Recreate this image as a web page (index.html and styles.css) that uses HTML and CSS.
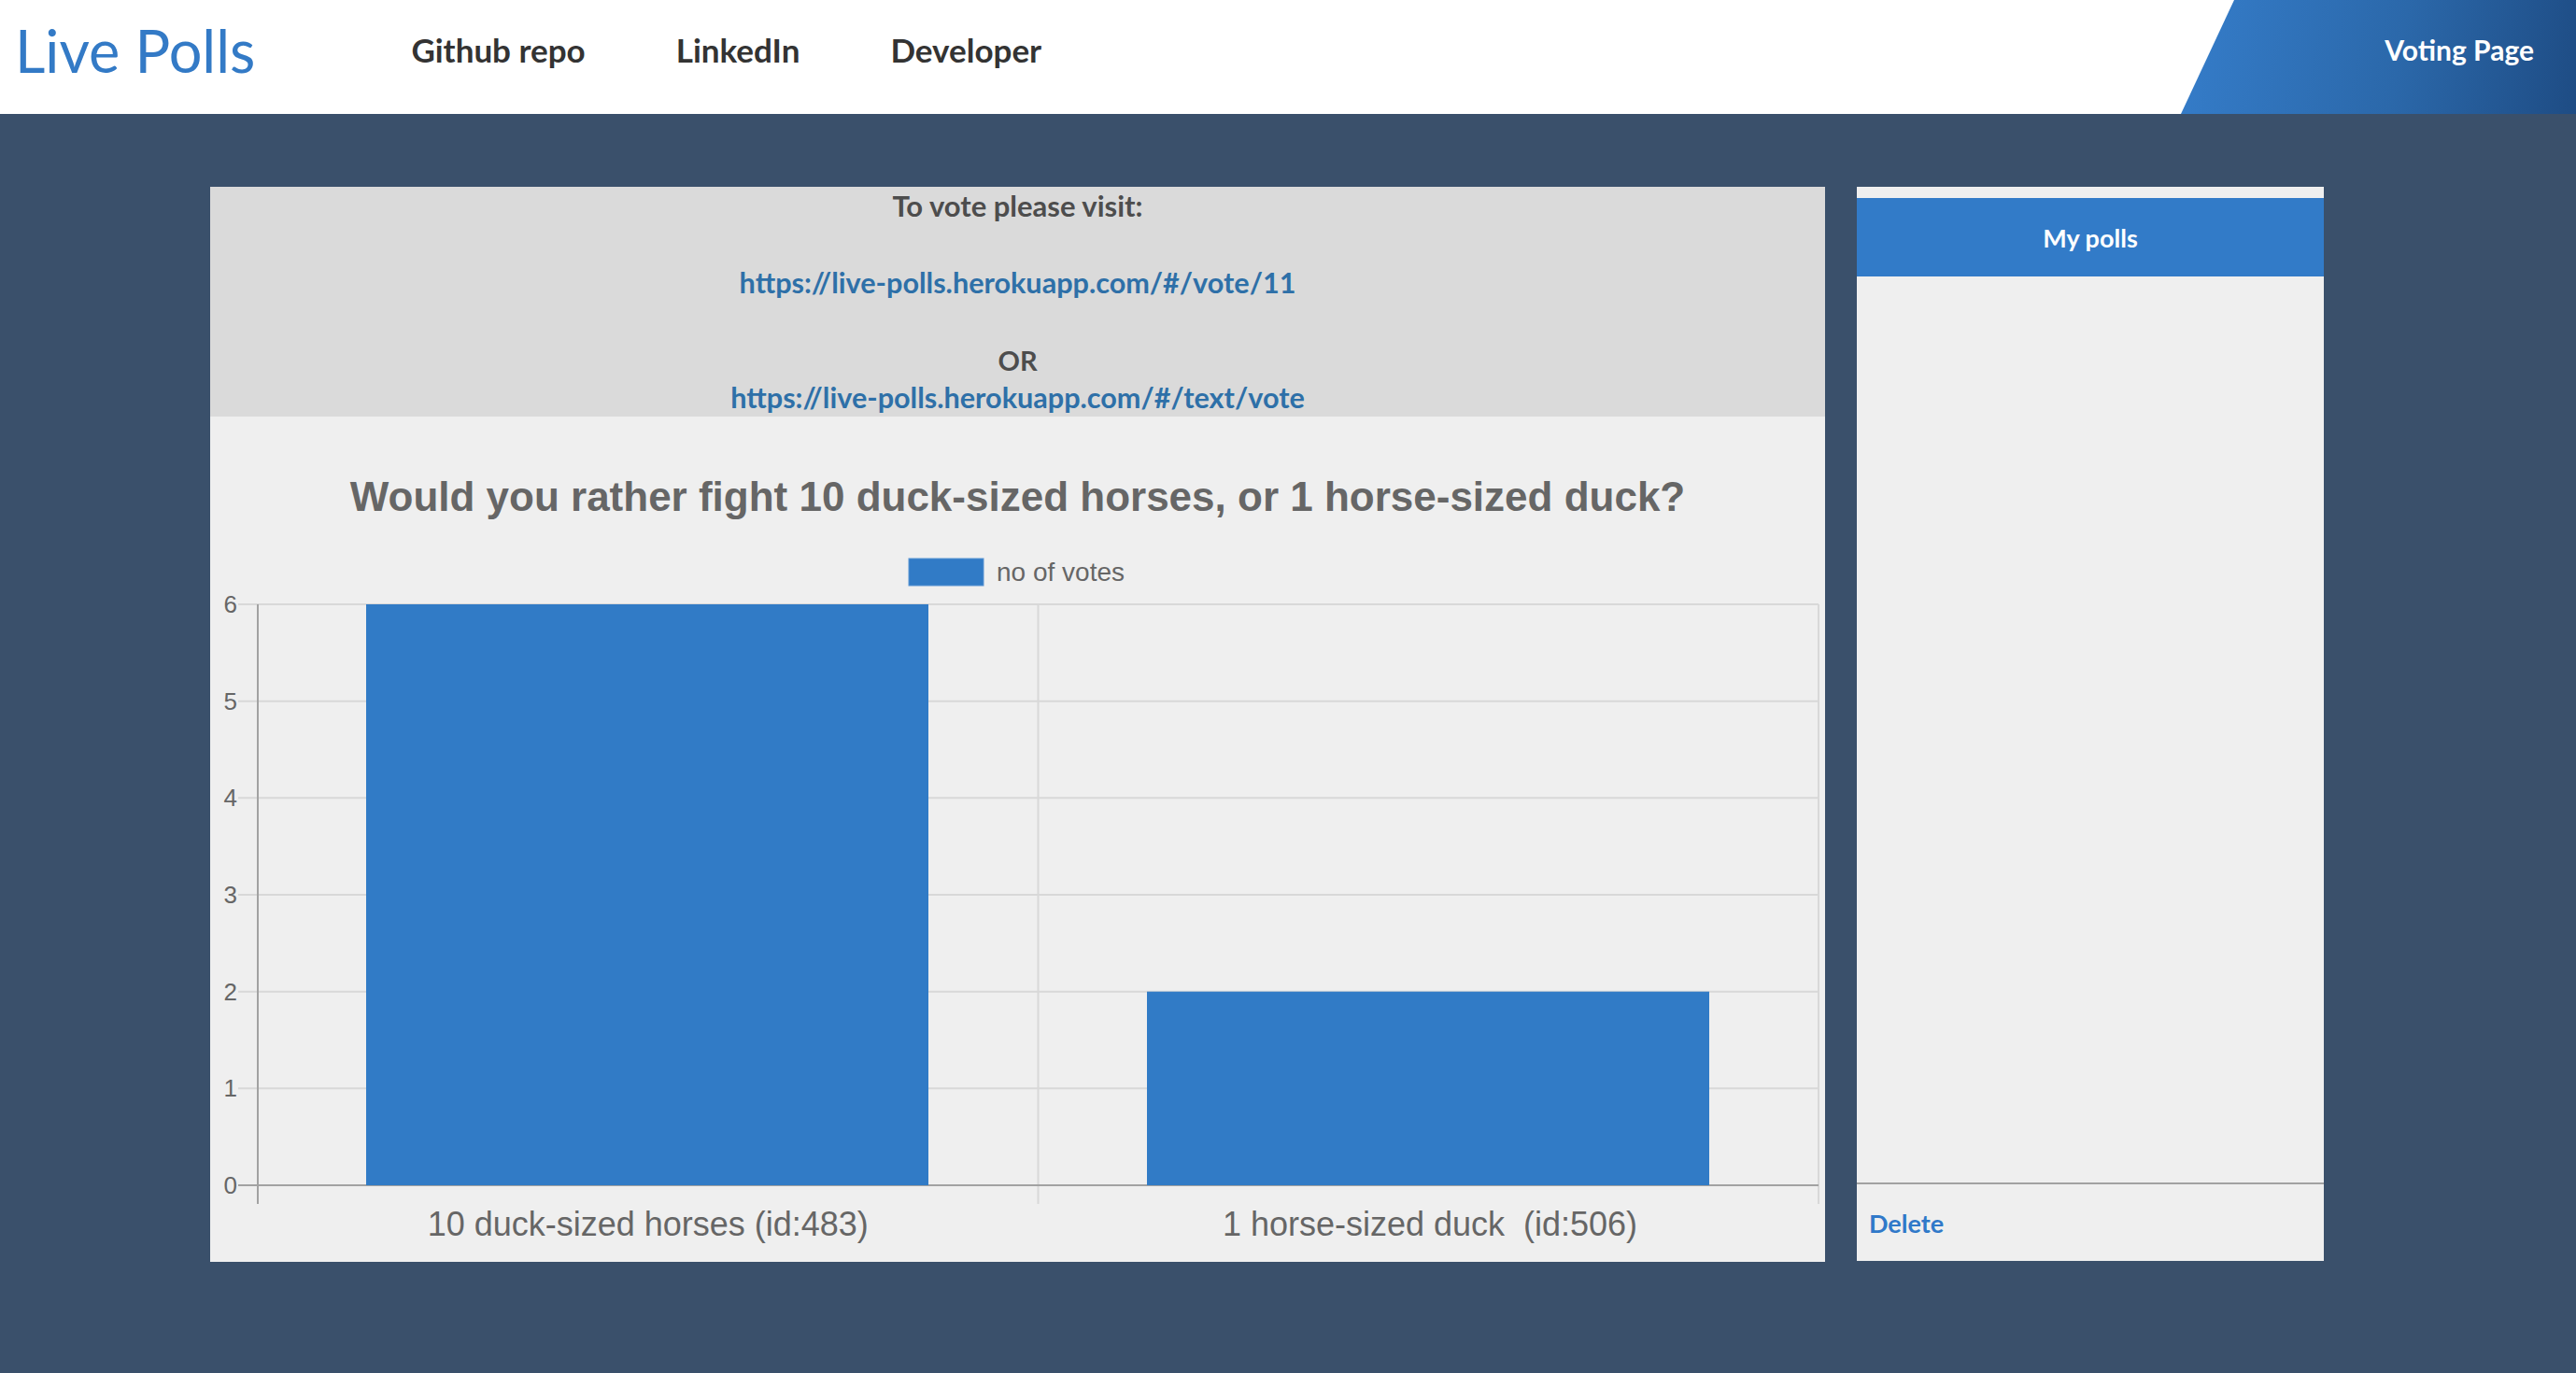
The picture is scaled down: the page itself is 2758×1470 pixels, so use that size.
FILE: index.html
```html
<!DOCTYPE html>
<html lang="en">
<head>
<meta charset="utf-8">
<title>Live Polls</title>
<link rel="stylesheet" href="styles.css">
</head>
<body>
<header class="topbar">
  <a class="brand" href="#">Live Polls</a>
  <nav class="nav">
    <a class="nav-link" href="#">Github repo</a>
    <a class="nav-link" href="#">LinkedIn</a>
    <a class="nav-link" href="#">Developer</a>
  </nav>
  <a class="voting" href="#">Voting Page</a>
</header>

<main class="main">
  <section class="poll-card">
    <div class="visit">
      <h4 class="visit-title">To vote please visit:</h4>
      <a class="visit-link first" href="#">https://live-polls.herokuapp.com/#/vote/11</a>
      <p class="visit-or">OR</p>
      <a class="visit-link last" href="#">https://live-polls.herokuapp.com/#/text/vote</a>
    </div>
    <div class="chart">
      <svg class="chart-svg" width="1729" height="905" viewBox="0 0 1729 905">
        <text class="c-title" x="864.5" y="101" text-anchor="middle">Would you rather fight 10 duck-sized horses, or 1 horse-sized duck?</text>
        <rect x="748" y="152" width="80" height="29" fill="#317bc6" stroke="#5a95d3" stroke-width="1"/>
        <text class="c-legend" x="842" y="176">no of votes</text>

        <g stroke="#d8d8d8" stroke-width="2">
          <line x1="30" y1="201" x2="1722" y2="201"/>
          <line x1="30" y1="304.67" x2="1722" y2="304.67"/>
          <line x1="30" y1="408.33" x2="1722" y2="408.33"/>
          <line x1="30" y1="512" x2="1722" y2="512"/>
          <line x1="30" y1="615.67" x2="1722" y2="615.67"/>
          <line x1="30" y1="719.33" x2="1722" y2="719.33"/>
          <line x1="886.5" y1="201" x2="886.5" y2="843"/>
          <line x1="1722" y1="201" x2="1722" y2="843"/>
        </g>
        <g stroke="#a2a2a2" stroke-width="2">
          <line x1="30" y1="823" x2="1722" y2="823"/>
          <line x1="51" y1="201" x2="51" y2="843"/>
        </g>

        <rect x="167" y="201" width="602" height="622" fill="#317bc6"/>
        <rect x="1003" y="615.67" width="602" height="207.33" fill="#317bc6"/>

        <g class="c-ytick" text-anchor="end">
          <text x="29" y="210">6</text>
          <text x="29" y="313.67">5</text>
          <text x="29" y="417.33">4</text>
          <text x="29" y="521">3</text>
          <text x="29" y="624.67">2</text>
          <text x="29" y="728.33">1</text>
          <text x="29" y="832">0</text>
        </g>
        <g class="c-xtick" text-anchor="middle">
          <text x="468.75" y="877">10 duck-sized horses (id:483)</text>
          <text x="1306" y="877" xml:space="preserve">1 horse-sized duck  (id:506)</text>
        </g>
      </svg>
    </div>
  </section>

  <aside class="polls-panel">
    <div class="polls-head">My polls</div>
    <div class="polls-list"></div>
    <div class="polls-foot">
      <a class="delete" href="#">Delete</a>
    </div>
  </aside>
</main>
</body>
</html>
```

FILE: styles.css
```css
* { box-sizing: border-box; }

html, body {
  margin: 0;
  padding: 0;
}

body {
  background: #3a506b;
  font-family: "Source Sans Pro", "Lato", "Open Sans", sans-serif;
  min-height: 1470px;
}

a { text-decoration: none; }

.topbar {
  height: 122px;
  background: #ffffff;
  display: flex;
  align-items: center;
}

.brand {
  margin-left: 16px;
  padding-bottom: 16px;
  font-size: 63px;
  font-weight: 400;
  color: #337ac6;
}

.nav {
  display: flex;
  gap: 97px;
  margin-left: 167px;
  padding-bottom: 16px;
}

.nav-link {
  font-size: 35px;
  font-weight: 700;
  color: #333333;
}

.voting {
  margin-left: auto;
  align-self: stretch;
  width: 423px;
  display: flex;
  align-items: center;
  justify-content: flex-end;
  padding: 0 45px 16px 0;
  background: linear-gradient(100deg, #357dca 0%, #2b68aa 55%, #1e4c84 100%);
  clip-path: polygon(57px 0, 100% 0, 100% 100%, 0 100%);
  color: #ffffff;
  font-size: 30px;
  font-weight: 700;
}

.main {
  display: flex;
  align-items: flex-start;
  gap: 34px;
  padding: 78px 0 0 225px;
}

.poll-card {
  width: 1729px;
  height: 1151px;
  background: #efefef;
  display: flex;
  flex-direction: column;
}

.visit {
  height: 246px;
  background: #dadada;
  text-align: center;
  padding-top: 2px;
}

.visit-title {
  margin: 0;
  line-height: 36px;
  font-size: 31px;
  font-weight: 700;
  color: #4d4d4d;
}

.visit-link {
  display: block;
  line-height: 36px;
  font-size: 30.6px;
  font-weight: 700;
  color: #2e70a8;
}

.visit-link.first { margin-top: 47px; }
.visit-link.last { margin-top: 4px; }

.visit-or {
  margin: 47px 0 0;
  line-height: 36px;
  font-size: 29px;
  font-weight: 700;
  color: #4d4d4d;
}

.chart {
  flex: 1;
}

.chart-svg {
  display: block;
  font-family: "Liberation Sans", Arial, sans-serif;
}

.c-title {
  font-size: 44px;
  font-weight: 700;
  fill: #666666;
}

.c-legend {
  font-size: 28px;
  fill: #666666;
}

.c-ytick text {
  font-size: 26px;
  fill: #666666;
}

.c-xtick text {
  font-size: 36px;
  fill: #666666;
}

.polls-panel {
  width: 500px;
  height: 1150px;
  background: #efefef;
  display: flex;
  flex-direction: column;
  padding-top: 12px;
}

.polls-head {
  height: 84px;
  background: #327bc8;
  color: #ffffff;
  display: flex;
  align-items: center;
  justify-content: center;
  font-size: 27px;
  font-weight: 700;
}

.polls-list {
  flex: 1;
}

.polls-foot {
  height: 84px;
  border-top: 2px solid #a2a2a2;
  display: flex;
  align-items: center;
  padding-left: 13px;
}

.delete {
  font-size: 27px;
  font-weight: 700;
  color: #3079c9;
}
```
